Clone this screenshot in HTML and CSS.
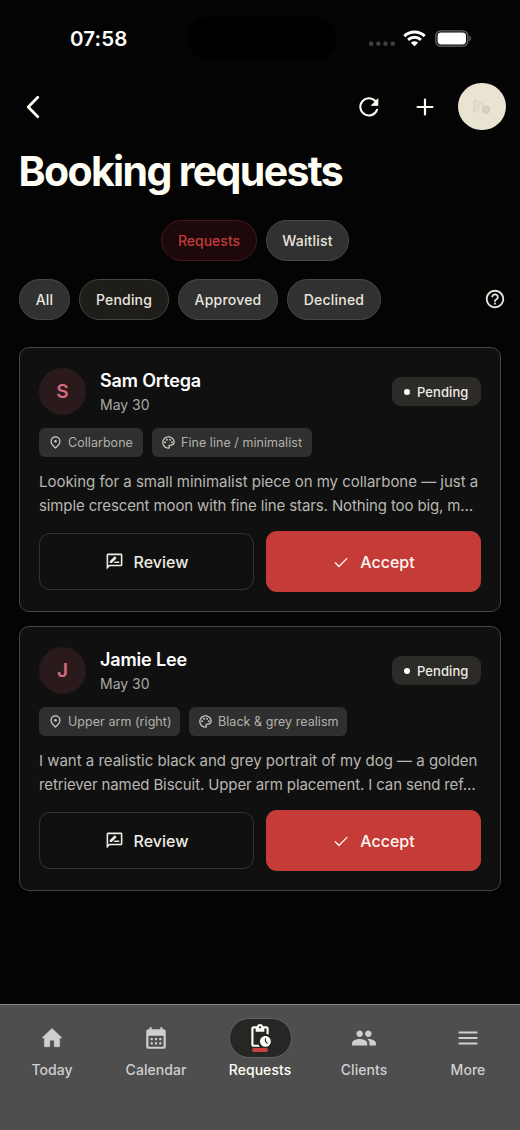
FILE: index.html
```
<!DOCTYPE html>
<html lang="en">
<head>
<meta charset="utf-8">
<title>Booking requests</title>
<link rel="stylesheet" href="styles.css">
</head>
<body>
<svg class="sprite" aria-hidden="true">
  <symbol id="pin" viewBox="0 0 24 24"><path d="M12 3C7.9 3 4.9 6.2 4.9 9.9c0 4.300 3.600 7.900 7.100 10.900 3.500-3 7.100-6.600 7.100-10.900C19.100 6.200 16.100 3 12 3z" fill="none" stroke="currentColor" stroke-width="2"/><circle cx="12" cy="9.800" r="2"/></symbol>
  <symbol id="palette" viewBox="0 0 24 24"><path d="M12 22C6.49 22 2 17.51 2 12S6.49 2 12 2s10 4.04 10 9c0 3.31-2.69 6-6 6h-1.77c-.28 0-.5.22-.5.5 0 .12.05.23.13.33.41.47.64 1.06.64 1.67A2.5 2.5 0 0 1 12 22zm0-18c-4.41 0-8 3.59-8 8s3.59 8 8 8c.28 0 .5-.22.5-.5a.54.54 0 0 0-.14-.35c-.41-.46-.63-1.05-.63-1.65a2.5 2.5 0 0 1 2.5-2.5H16c2.21 0 4-1.79 4-4 0-3.86-3.59-7-8-7z"/><circle cx="6.5" cy="11.5" r="1.5"/><circle cx="9.5" cy="7.5" r="1.5"/><circle cx="14.5" cy="7.5" r="1.5"/><circle cx="17.5" cy="11.5" r="1.5"/></symbol>
  <symbol id="review" viewBox="0 0 24 24"><path d="M20 2H4c-1.1 0-2 .9-2 2v18l4-4h14c1.1 0 2-.9 2-2V4c0-1.1-.9-2-2-2zm0 14H5.17L4 17.17V4h16v12z"/><path d="M10.5 14H18v-2h-5.5zM14.36 8.13c.2-.2.2-.51 0-.71l-1.77-1.77c-.2-.2-.51-.2-.71 0L6 11.53V14h2.47l5.89-5.87z"/></symbol>
  <symbol id="check" viewBox="0 0 24 24"><path d="M4 12.800 9.300 18 20.300 6.800" fill="none" stroke="currentColor" stroke-width="1.800"/></symbol>
</svg>

<header class="status">
  <span class="time">07:58</span>
  <span class="island"></span>
  <span class="signals">
    <svg class="dots" width="27" height="5"><g fill="#414141"><rect x="0" y=".5" width="4.2" height="4.2" rx="1.5"/><rect x="7.2" y=".5" width="4.2" height="4.2" rx="1.5"/><rect x="14.4" y=".5" width="4.2" height="4.2" rx="1.5"/><rect x="21.6" y=".5" width="4.2" height="4.2" rx="1.5"/></g></svg>
    <svg class="wifi" width="23" height="17" viewBox="0 0 23 17"><g fill="none" stroke="#fff" stroke-width="2.9"><path d="M1.3 6.1a14.6 14.6 0 0 1 20.4 0"/><path d="M5.1 9.9a9.2 9.2 0 0 1 12.8 0"/></g><path d="M11.5 16.3 7.9 12.8a5.2 5.2 0 0 1 7.2 0z" fill="#fff"/></svg>
    <svg class="battery" width="37" height="17" viewBox="0 0 37 17"><rect x=".8" y=".8" width="32" height="15.4" rx="5" fill="none" stroke="#696969" stroke-width="1.3"/><rect x="2.6" y="2.5" width="28.4" height="12" rx="3.4" fill="#fff"/><path d="M34.4 5.6c2 .6 2 5.2 0 5.8z" fill="#696969"/></svg>
  </span>
</header>

<div class="toolbar">
  <svg class="back" width="16" height="24" viewBox="0 0 16 24"><path d="M12.8 2.2 3.200 12l9.600 9.800" fill="none" stroke="#fffef5" stroke-width="2.7" stroke-linecap="round" stroke-linejoin="round"/></svg>
  <svg class="refresh" width="24" height="24" viewBox="0 0 24 24"><path d="M19 7A8.600 8.600 0 1 0 20 14.800" fill="none" stroke="#fffef5" stroke-width="2" stroke-linecap="round"/><path d="M20.900 3.700v6.700h-6.600l2.500-2.500 1.600-1.700z" fill="#fffef5" stroke="#fffef5" stroke-width=".8" stroke-linejoin="round"/></svg>
  <svg class="plus" width="18" height="18" viewBox="0 0 18 18"><path d="M9 1.6v14.8M1.6 9h14.8" stroke="#fffef5" stroke-width="2.2" stroke-linecap="round"/></svg>
  <span class="profile"><svg width="20" height="18" viewBox="0 0 20 18"><path d="M2.2 1.8v11.8l5-1.6M2.2 1.8 12 7.2M3 6.2l6 1.4M3 9.4h5" fill="none" stroke="#dcd4c9" stroke-width="1.5"/><circle cx="14" cy="11.8" r="4.1" fill="#d3cbc3"/><path d="M14 9.8v2.4h1.6" fill="none" stroke="#e5dfcf"/></svg></span>
</div>

<h1 class="title">Booking requests</h1>

<div class="switch">
  <span class="chip chip-active w-req">Requests</span>
  <span class="chip w-wait">Waitlist</span>
</div>

<div class="filters">
  <span class="chip w-all">All</span>
  <span class="chip chip-selected w-pen">Pending</span>
  <span class="chip w-app">Approved</span>
  <span class="chip w-dec">Declined</span>
  <svg class="help" width="22" height="22" viewBox="0 0 24 24"><path d="M11 18h2v-2h-2v2zm1-16C6.48 2 2 6.48 2 12s4.48 10 10 10 10-4.48 10-10S17.52 2 12 2zm0 18c-4.41 0-8-3.59-8-8s3.59-8 8-8 8 3.59 8 8-3.59 8-8 8zm0-14c-2.21 0-4 1.79-4 4h2c0-1.1.9-2 2-2s2 .9 2 2c0 2-3 1.75-3 5h2c0-2.25 3-2.5 3-5 0-2.21-1.79-4-4-4z"/></svg>
</div>

<main class="cards">
  <article class="card">
    <div class="head">
      <span class="avatar">S</span>
      <div class="who"><div class="name">Sam Ortega</div><div class="date">May 30</div></div>
      <span class="badge"><i class="dot"></i>Pending</span>
    </div>
    <div class="tags">
      <span class="tag w-t1"><svg><use href="#pin"/></svg>Collarbone</span>
      <span class="tag w-t2"><svg><use href="#palette"/></svg>Fine line / minimalist</span>
    </div>
    <p class="desc"><span class="line">Looking for a small minimalist piece on my collarbone — just a</span><span class="line line-end">simple crescent moon with fine line stars. Nothing too big, m…</span></p>
    <div class="actions">
      <span class="btn outline"><svg class="ic-review"><use href="#review"/></svg>Review</span>
      <span class="btn solid"><svg class="ic-check"><use href="#check"/></svg>Accept</span>
    </div>
  </article>
  <article class="card">
    <div class="head">
      <span class="avatar">J</span>
      <div class="who"><div class="name">Jamie Lee</div><div class="date">May 30</div></div>
      <span class="badge"><i class="dot"></i>Pending</span>
    </div>
    <div class="tags">
      <span class="tag w-t3"><svg><use href="#pin"/></svg>Upper arm (right)</span>
      <span class="tag w-t4"><svg><use href="#palette"/></svg>Black &amp; grey realism</span>
    </div>
    <p class="desc"><span class="line">I want a realistic black and grey portrait of my dog — a golden</span><span class="line line-end">retriever named Biscuit. Upper arm placement. I can send ref…</span></p>
    <div class="actions">
      <span class="btn outline"><svg class="ic-review"><use href="#review"/></svg>Review</span>
      <span class="btn solid"><svg class="ic-check"><use href="#check"/></svg>Accept</span>
    </div>
  </article>
</main>

<nav class="nav">
  <a class="item"><span class="icon"><svg width="26" height="26" viewBox="0 0 24 24"><path d="M10 20v-6h4v6h5v-8h2.3L12 3.2 2.7 12H5v8z" stroke="currentColor" stroke-width=".5" stroke-linejoin="round"/></svg></span>Today</a>
  <a class="item"><span class="icon"><svg width="26" height="26" viewBox="0 0 24 24"><path d="M19 4h-1V2h-2v2H8V2H6v2H5c-1.11 0-1.99.9-1.99 2L3 20c0 1.1.89 2 2 2h14c1.1 0 2-.9 2-2V6c0-1.1-.9-2-2-2zm0 16H5V10h14v10zM9 14H7v-2h2v2zm4 0h-2v-2h2v2zm4 0h-2v-2h2v2zm-8 4H7v-2h2v2zm4 0h-2v-2h2v2zm4 0h-2v-2h2v2z"/></svg></span>Calendar</a>
  <a class="item current"><span class="icon pill"><svg width="26" height="26" viewBox="0 0 24 24"><path d="M17 12c-2.76 0-5 2.24-5 5s2.24 5 5 5 5-2.24 5-5-2.24-5-5-5zm1.65 7.35L16.5 17.2V14h1v2.79l1.85 1.85-.7.71zM18 3h-3.18C14.4 1.84 13.3 1 12 1s-2.4.84-2.82 2H6c-1.1 0-2 .9-2 2v15c0 1.1.9 2 2 2h6.11a6.743 6.743 0 0 1-1.42-2H6V5h2v3h8V5h2v5.08c.71.1 1.38.31 2 .6V5c0-1.1-.9-2-2-2zm-6 2c-.55 0-1-.45-1-1s.45-1 1-1 1 .45 1 1-.45 1-1 1z"/></svg><i class="bar"></i></span>Requests</a>
  <a class="item"><span class="icon"><svg width="26" height="26" viewBox="0 0 24 24"><path d="M16 11c1.66 0 2.99-1.34 2.99-3S17.66 5 16 5c-1.66 0-3 1.34-3 3s1.34 3 3 3zm-8 0c1.66 0 2.99-1.34 2.99-3S9.66 5 8 5C6.34 5 5 6.34 5 8s1.34 3 3 3zm0 2c-2.33 0-7 1.17-7 3.5V19h14v-2.5c0-2.33-4.67-3.5-7-3.5zm8 0c-.29 0-.62.02-.97.05 1.16.84 1.97 1.97 1.97 3.45V19h6v-2.5c0-2.33-4.67-3.5-7-3.5z"/></svg></span>Clients</a>
  <a class="item"><span class="icon"><svg width="26" height="26" viewBox="0 0 24 24"><path d="M4 7h16M4 12h16M4 17h16" stroke="currentColor" stroke-width="1.8" stroke-linecap="round"/></svg></span>More</a>
</nav>
</body>
</html>
```
FILE: styles.css
```
* { box-sizing: border-box; }
html, body { margin: 0; height: 1130px; }
body {
  display: flex;
  flex-direction: column;
  background: #040404;
  color: #fffef5;
  font-family: Inter, "Liberation Sans", sans-serif;
  font-weight: 500;
  white-space: nowrap;
  overflow: hidden;
}
svg { fill: currentColor; flex: none; display: block; }
.sprite { width: 0; height: 0; position: absolute; }

.status { display: flex; height: 78px; padding: 17px 48px 0 70px; }
.time { width: 118px; height: 44px; line-height: 44px; font-size: 20.5px; font-weight: 600; letter-spacing: .15px; color: #fff; }
.island { width: 148px; height: 43px; border-radius: 22px; background: #000; }
.signals { display: flex; flex: 1; height: 43px; padding-left: 33px; }
.dots { margin-top: 24px; }
.wifi { margin: 13px 0 0 7px; }
.battery { margin: 12.5px 0 0 9px; }

.toolbar { display: flex; align-items: center; height: 57px; padding: 0 14px 0 25px; }
.refresh { margin-left: 316px; }
.plus { margin-left: 35px; }
.profile { display: grid; place-items: center; width: 47.500px; height: 47.500px; margin-left: 24px; border-radius: 50%; background: #e9e3d2; }

.title { margin: 11px 0 0 18.500px; height: 51px; line-height: 51px; font-size: 41px; font-weight: 700; letter-spacing: -1.650px; }

.switch { display: flex; justify-content: center; gap: 9px; margin-top: 23px; padding-right: 10px; }
.filters { display: flex; align-items: center; gap: 9px; margin-top: 18px; padding-left: 19px; }
.chip { display: grid; place-items: center; height: 41px; border: 1px solid #484848; border-radius: 21px; background: #313131; color: #e8e5dc; font-size: 14px; letter-spacing: .2px; }
.chip-active { background: #1d090b; border-color: #49171b; color: #c33b3a; letter-spacing: 0; }
.chip-selected { background: #1f1d1a; border-color: #464441; }
.w-req { width: 96px; } .w-wait { width: 83px; }
.w-all { width: 51px; } .w-pen { width: 90px; } .w-app { width: 100px; } .w-dec { width: 94px; }
.help { margin: -1px 14px 0 auto; color: #e8e5dc; }

.cards { display: flex; flex-direction: column; gap: 14px; padding: 27px 19px 0; }
.card { height: 265px; padding: 20px 19px 0; border: 1px solid #444; border-radius: 10px; background: #101010; }
.head { display: flex; align-items: center; height: 47px; }
.avatar { display: grid; place-items: center; width: 47px; height: 47px; border-radius: 50%; background: #2a1a1b; color: #d56a80; font-size: 19px; font-weight: 600; }
.who { flex: 1; padding-left: 14px; }
.name { height: 24px; line-height: 26px; font-size: 18px; font-weight: 600; letter-spacing: -.15px; color: #fff; }
.date { height: 23px; line-height: 25px; font-size: 14px; font-weight: 400; color: #a9a8a3; }
.badge { display: flex; align-items: center; gap: 7px; width: 89px; height: 29px; padding-left: 12px; border-radius: 9px; background: #2d2b28; color: #eeebe2; font-size: 13px; letter-spacing: .08px; }
.dot { width: 6px; height: 6px; border-radius: 50%; background: #fffef5; }
.tags { display: flex; gap: 9px; margin-top: 13px; }
.tag { display: flex; align-items: center; gap: 5px; height: 29px; padding-left: 9px; border-radius: 6px; background: #2f2f2f; color: #b3b1ab; font-size: 12.500px; letter-spacing: .05px; font-weight: 400; }
.tag svg { width: 15px; height: 15px; color: #cfccc4; }
.w-t1 { width: 104px; } .w-t2 { width: 160px; } .w-t3 { width: 141px; } .w-t4 { width: 158px; }
.desc { display: flex; flex-direction: column; align-items: flex-start; margin: 13px 0 0; line-height: 24px; font-size: 15px; font-weight: 400; color: #b9b7b1; }
.line { letter-spacing: -.020px; }
.line-end { letter-spacing: -.120px; }
.actions { display: flex; align-items: center; gap: 12px; height: 61px; margin-top: 13px; }
.btn { display: flex; align-items: center; justify-content: center; gap: 10px; width: 215px; height: 57px; border-radius: 11px; font-size: 16px; font-weight: 500; }
.outline { border: 1px solid #343434; color: #eeebe2; }
.solid { height: 61px; background: #c43b38; color: #fff6f0; }
.ic-review { width: 19px; height: 19px; }
.ic-check { width: 18px; height: 18px; }

.nav { display: flex; height: 126px; margin-top: auto; padding-top: 13px; border-top: 1.5px solid #8b8b8b; background: #4e4e4e; color: #cfcfcf; font-size: 14px; }
.item { display: flex; flex: 1; flex-direction: column; align-items: center; gap: 2.500px; line-height: 18px; letter-spacing: .05px; }
.icon { display: flex; flex-direction: column; align-items: center; height: 40px; padding-top: 7px; }
.pill { width: 63px; padding-top: 4px; border: 1px solid #626262; border-radius: 20px; background: #262624; }
.bar { width: 16px; height: 3.5px; margin-top: -1px; border-radius: 2px; background: #cd3f3c; }
.current { color: #fffef5; }
```
